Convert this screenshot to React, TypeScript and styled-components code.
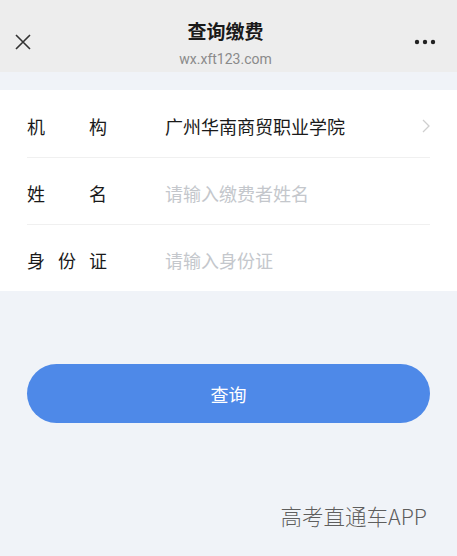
import styled, { createGlobalStyle } from "styled-components";

const GlobalStyle = createGlobalStyle`
  html, body {
    margin: 0;
    padding: 0;
    background: #f0f3f8;
    font-family: "Noto Sans CJK SC", "Noto Sans", sans-serif;
  }
`;

type Field = {
  label: string;
  value?: string;
  placeholder?: string;
  link?: boolean;
};

const fields: Field[] = [
  { label: "机构", value: "广州华南商贸职业学院", link: true },
  { label: "姓名", placeholder: "请输入缴费者姓名" },
  { label: "身份证", placeholder: "请输入身份证" },
];

const CloseIcon = () => (
  <svg width="16" height="16" viewBox="0 0 16 16">
    <path d="M1 1 L15 15 M15 1 L1 15" stroke="#333" strokeWidth="1.6" fill="none" />
  </svg>
);

const MoreIcon = () => (
  <svg width="22" height="6" viewBox="0 0 22 6">
    <circle cx="3" cy="3" r="2.2" fill="#222" />
    <circle cx="11" cy="3" r="2.2" fill="#222" />
    <circle cx="19" cy="3" r="2.2" fill="#222" />
  </svg>
);

const Chevron = () => (
  <svg width="8" height="14" viewBox="0 0 8 14">
    <path d="M1 1 L7 7 L1 13" stroke="#cfcfcf" strokeWidth="1.3" fill="none" />
  </svg>
);

const App = () => {
  return (
    <Page>
      <GlobalStyle />
      <Header>
        <IconSlot>
          <CloseIcon />
        </IconSlot>
        <TitleBlock>
          <Title>查询缴费</Title>
          <Subtitle>wx.xft123.com</Subtitle>
        </TitleBlock>
        <IconSlot $right>
          <MoreIcon />
        </IconSlot>
      </Header>
      <Card>
        {fields.map((f) => (
          <Row key={f.label}>
            <Label>{f.label}</Label>
            {f.value ? (
              <Value>{f.value}</Value>
            ) : (
              <Input placeholder={f.placeholder} />
            )}
            {f.link && <Chevron />}
          </Row>
        ))}
      </Card>
      <SubmitButton>查询</SubmitButton>
      <Watermark>高考直通车APP</Watermark>
    </Page>
  );
};

const Page = styled.div`
  min-height: 556px;
  display: flex;
  flex-direction: column;
`;

const Header = styled.div`
  height: 72px;
  background: #ededed;
  display: flex;
  align-items: center;
  padding: 0 14px;
  margin-bottom: 18px;
`;

const IconSlot = styled.div<{ $right?: boolean }>`
  width: 40px;
  display: flex;
  justify-content: ${(p) => (p.$right ? "flex-end" : "flex-start")};
  align-items: center;
  padding-top: 12px;
  padding-left: ${(p) => (p.$right ? "0" : "1px")};
  padding-right: ${(p) => (p.$right ? "7px" : "0")};
`;

const TitleBlock = styled.div`
  flex: 1;
  display: flex;
  flex-direction: column;
  align-items: center;
  padding-top: 14px;
`;

const Title = styled.div`
  font-size: 19px;
  font-weight: 700;
  color: #1a1a1a;
  line-height: 26px;
`;

const Subtitle = styled.div`
  font-family: Roboto, "Noto Sans", sans-serif;
  font-size: 14px;
  color: #8a8a8a;
  line-height: 20px;
  margin-top: 5px;
`;

const Card = styled.div`
  background: #fff;
  padding: 0 27px;
`;

const Row = styled.div`
  height: 67px;
  display: flex;
  align-items: center;
  & + & {
    border-top: 1px solid #f0f0f0;
  }
  padding-top: 4px;
  box-sizing: border-box;
`;

const Label = styled.div`
  width: 80px;
  margin-right: 58px;
  font-size: 18px;
  color: #1a1a1a;
  text-align: justify;
  text-align-last: justify;
`;

const Value = styled.div`
  flex: 1;
  font-size: 18px;
  color: #1a1a1a;
`;

const Input = styled.input`
  flex: 1;
  border: none;
  outline: none;
  padding: 0;
  background: transparent;
  font-family: "Noto Sans CJK SC", sans-serif;
  font-size: 18px;
  color: #1a1a1a;
  &::placeholder {
    color: #c4c7cc;
  }
`;

const SubmitButton = styled.button`
  margin: 73px 27px 0;
  height: 59px;
  border: none;
  border-radius: 30px;
  background: #4e89e8;
  color: #fff;
  font-family: "Noto Sans CJK SC", sans-serif;
  font-size: 18px;
`;

const Watermark = styled.div`
  align-self: flex-end;
  margin: 77px 30px 0 0;
  font-size: 21.5px;
  font-weight: 300;
  color: #5e5e5e;
  text-shadow: 0 0 1px #fff;
`;

export default App;
